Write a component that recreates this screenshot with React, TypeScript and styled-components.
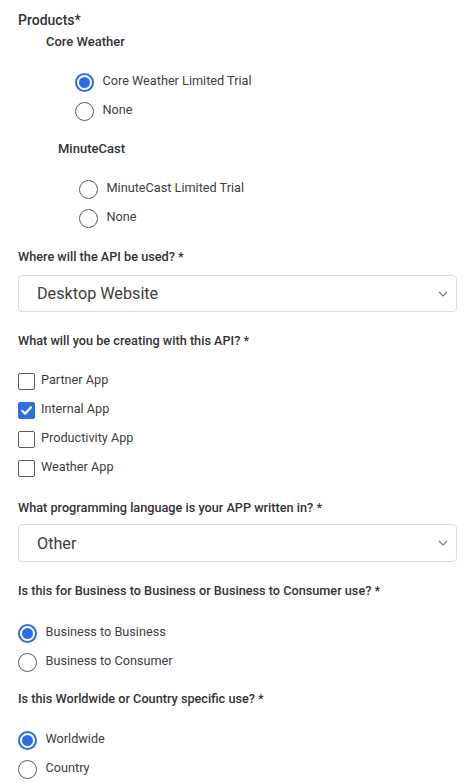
import React, { useState } from 'react';
import styled, { createGlobalStyle } from 'styled-components';

const GlobalStyle = createGlobalStyle`
  html, body {
    margin: 0;
    padding: 0;
    background: #ffffff;
  }
  body {
    font-family: Roboto, 'Liberation Sans', sans-serif;
    color: #3d3d3d;
  }
`;

const Form = styled.form`
  display: flex;
  flex-direction: column;
  padding: 10px 17px 0 18px;
`;

const Title = styled.div<{ $top?: number }>`
  margin-top: ${(p) => p.$top ?? 0}px;
  font-size: 14px;
  font-weight: 500;
  line-height: 20px;
  color: #333;
`;

const SubTitle = styled.div<{ $top: number; $indent: number }>`
  margin-top: ${(p) => p.$top}px;
  margin-left: ${(p) => p.$indent}px;
  font-size: 13px;
  font-weight: 500;
  line-height: 20px;
  color: #333;
`;

const Question = styled.div<{ $top: number }>`
  margin-top: ${(p) => p.$top}px;
  font-size: 12.7px;
  font-weight: 500;
  line-height: 20px;
  color: #333;
`;

const Group = styled.div<{ $top: number; $indent?: number }>`
  display: flex;
  flex-direction: column;
  margin-top: ${(p) => p.$top}px;
  margin-left: ${(p) => p.$indent ?? 0}px;
`;

const Row = styled.label`
  display: flex;
  align-items: center;
  height: 29px;
  cursor: pointer;
`;

const RadioCircle = styled.span<{ $on: boolean }>`
  box-sizing: border-box;
  width: 19px;
  height: 19px;
  border-radius: 50%;
  border: ${(p) => (p.$on ? '2px solid #2b6de6' : '1.3px solid #5a5a5a')};
  display: flex;
  align-items: center;
  justify-content: center;
  flex-shrink: 0;

  &::after {
    content: '';
    display: ${(p) => (p.$on ? 'block' : 'none')};
    width: 11px;
    height: 11px;
    border-radius: 50%;
    background: #2b6de6;
  }
`;

const Box = styled.span<{ $on: boolean }>`
  box-sizing: border-box;
  width: 17px;
  height: 17px;
  border-radius: 2px;
  border: 1.3px solid ${(p) => (p.$on ? '#2b6de6' : '#5a5a5a')};
  background: ${(p) => (p.$on ? '#2b6de6' : '#fff')};
  display: flex;
  align-items: center;
  justify-content: center;
  flex-shrink: 0;
`;

const Text = styled.span<{ $gap: number }>`
  margin-left: ${(p) => p.$gap}px;
  padding-bottom: 4px;
  font-size: 12.7px;
  color: #404040;
`;

const SelectBox = styled.div<{ $top: number; $height: number }>`
  box-sizing: border-box;
  margin-top: ${(p) => p.$top}px;
  height: ${(p) => p.$height}px;
  border: 1px solid #dcdcdc;
  border-radius: 4px;
  display: flex;
  align-items: center;
  justify-content: space-between;
  padding: 0 8px 0 18px;
  font-size: 16.2px;
  color: #3d3d3d;
`;

const Chevron = () => (
  <svg width="10" height="6" viewBox="0 0 10 6" fill="none">
    <path d="M1 1l4 4 4-4" stroke="#777" strokeWidth="1.1" />
  </svg>
);

const Check = () => (
  <svg width="13" height="13" viewBox="0 0 13 13" fill="none">
    <path d="M2.2 6.8l2.9 2.9 5.8-6.3" stroke="#fff" strokeWidth="2.2" strokeLinecap="round" strokeLinejoin="round" />
  </svg>
);

type RadioListProps = {
  options: string[];
  value: string;
  onChange: (v: string) => void;
  top: number;
  indent?: number;
};

function RadioList({ options, value, onChange, top, indent }: RadioListProps) {
  return (
    <Group $top={top} $indent={indent}>
      {options.map((o) => (
        <Row key={o} onClick={() => onChange(o)}>
          <RadioCircle $on={value === o} />
          <Text $gap={8.5}>{o}</Text>
        </Row>
      ))}
    </Group>
  );
}

export default function App() {
  const [core, setCore] = useState('Core Weather Limited Trial');
  const [minute, setMinute] = useState('');
  const [business, setBusiness] = useState('Business to Business');
  const [region, setRegion] = useState('Worldwide');
  const [apps, setApps] = useState<string[]>(['Internal App']);

  const toggle = (a: string) =>
    setApps((prev) => (prev.includes(a) ? prev.filter((x) => x !== a) : [...prev, a]));

  return (
    <>
      <GlobalStyle />
      <Form onSubmit={(e) => e.preventDefault()}>
        <Title>Products*</Title>
        <SubTitle $top={2} $indent={28}>Core Weather</SubTitle>
        <RadioList
          top={15.5}
          indent={57}
          options={['Core Weather Limited Trial', 'None']}
          value={core}
          onChange={setCore}
        />
        <SubTitle $top={13.5} $indent={40}>MinuteCast</SubTitle>
        <RadioList
          top={15.5}
          indent={61}
          options={['MinuteCast Limited Trial', 'None ']}
          value={minute}
          onChange={setMinute}
        />

        <Question $top={14.5}>Where will the API be used? *</Question>
        <SelectBox $top={8} $height={37}>
          Desktop Website
          <Chevron />
        </SelectBox>

        <Question $top={19}>What will you be creating with this API? *</Question>
        <Group $top={15.5}>
          {['Partner App', 'Internal App', 'Productivity App', 'Weather App'].map((a) => (
            <Row key={a} onClick={() => toggle(a)}>
              <Box $on={apps.includes(a)}>{apps.includes(a) && <Check />}</Box>
              <Text $gap={6}>{a}</Text>
            </Row>
          ))}
        </Group>

        <Question $top={15.5}>What programming language is your APP written in? *</Question>
        <SelectBox $top={6} $height={38}>
          Other
          <Chevron />
        </SelectBox>

        <Question $top={19}>Is this for Business to Business or Business to Consumer use? *</Question>
        <RadioList
          top={17.5}
          options={['Business to Business', 'Business to Consumer']}
          value={business}
          onChange={setBusiness}
        />

        <Question $top={12.5}>Is this Worldwide or Country specific use? *</Question>
        <RadioList
          top={16.5}
          options={['Worldwide', 'Country']}
          value={region}
          onChange={setRegion}
        />
      </Form>
    </>
  );
}
